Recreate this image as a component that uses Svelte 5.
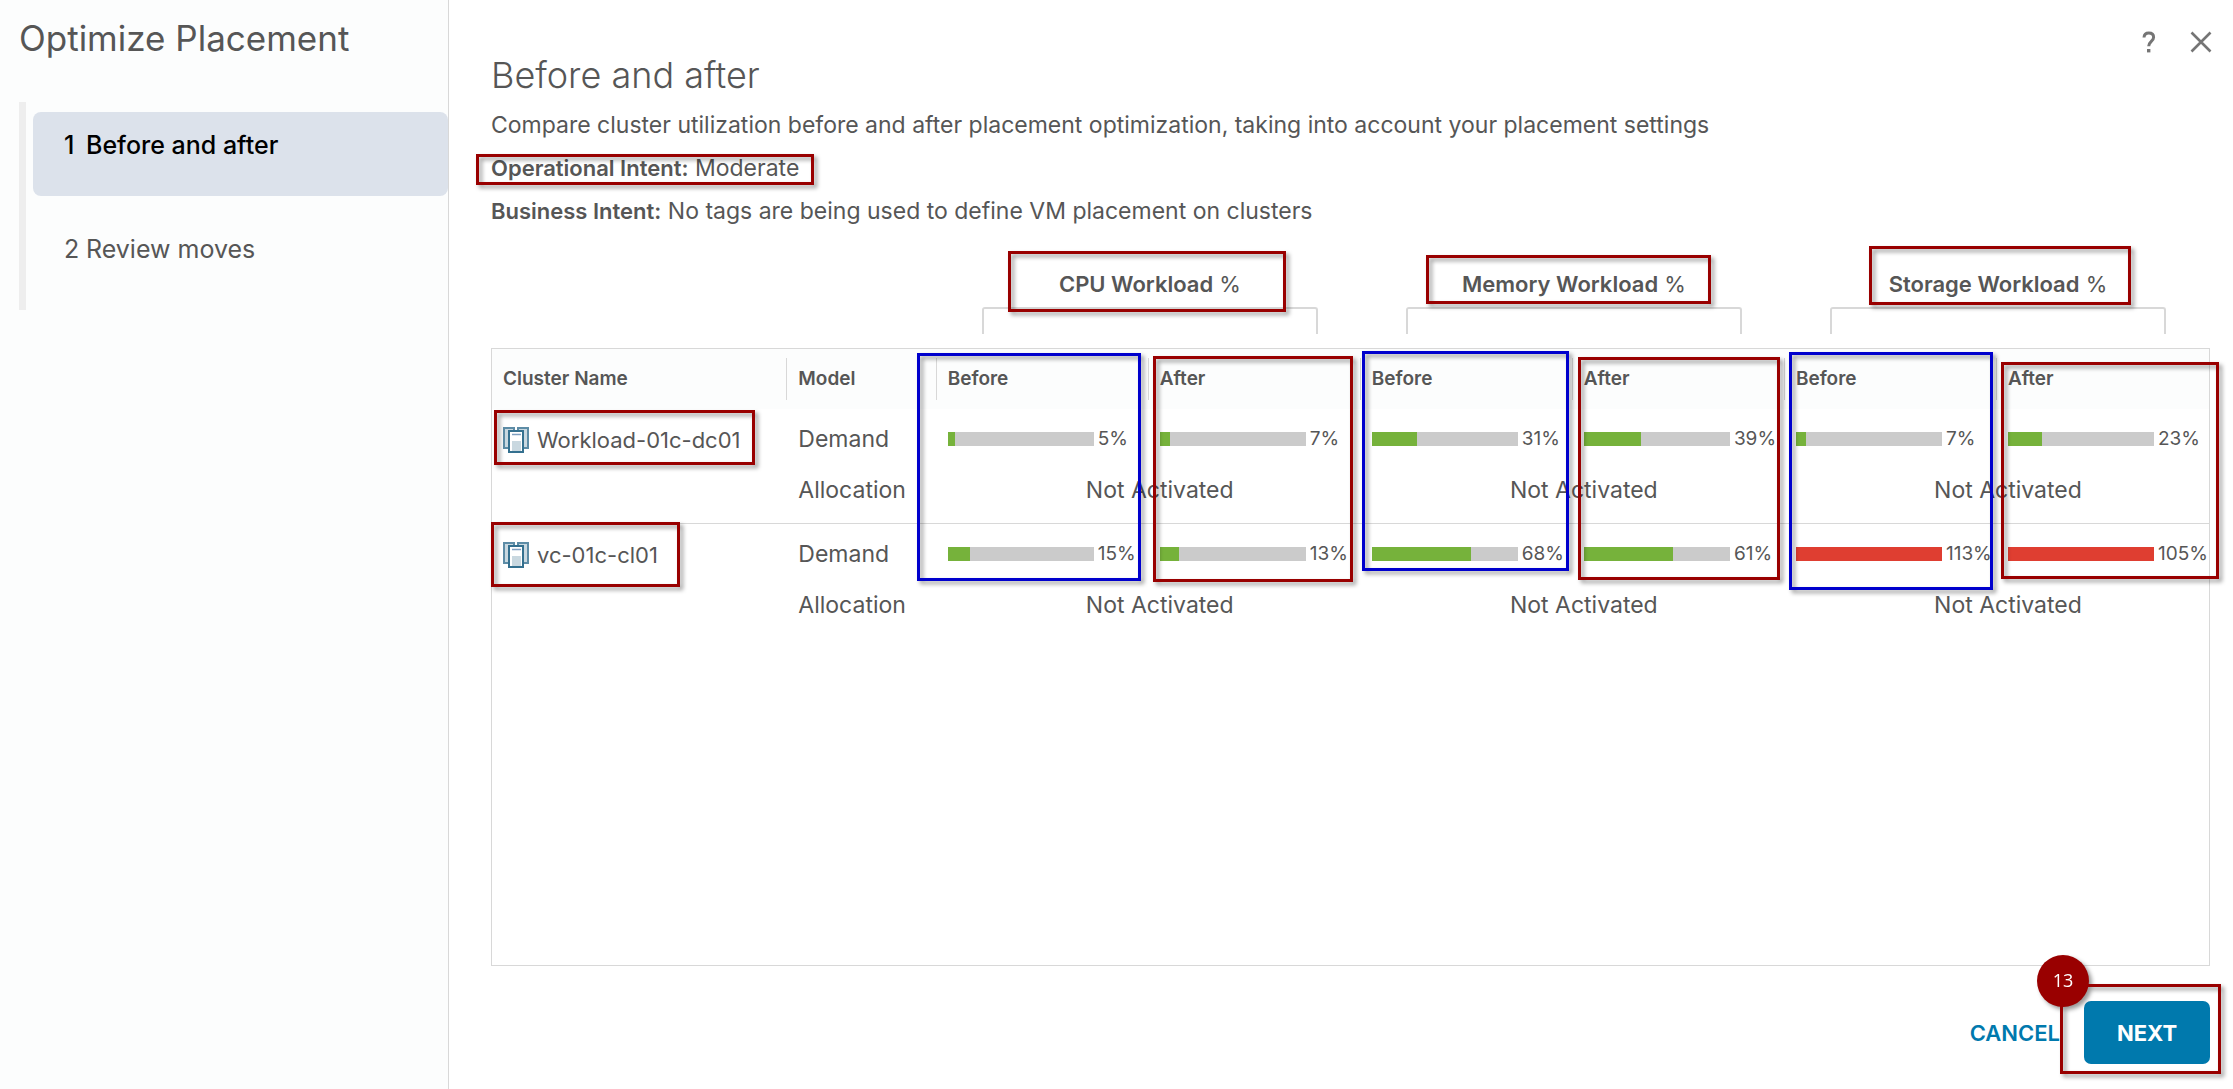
<script>
	const steps = [
		{ label: 'Before and after', active: true },
		{ label: 'Review moves', active: false }
	];

	const groups = ['CPU Workload', 'Memory Workload', 'Storage Workload'];

	// before/after pairs for cpu, memory, storage
	const clusters = [
		{ name: 'Workload-01c-dc01', demand: [5, 7, 31, 39, 7, 23] },
		{ name: 'vc-01c-cl01', demand: [15, 13, 68, 61, 113, 105] }
	];

	// callout frames laid over the dialog
	const marks = [
		{ x: 476, y: 154, w: 338, h: 31 },
		{ x: 1008, y: 251, w: 278, h: 61 },
		{ x: 1426, y: 255, w: 285, h: 49 },
		{ x: 1869, y: 246, w: 262, h: 59 },
		{ x: 494, y: 410, w: 261, h: 55 },
		{ x: 491, y: 522, w: 189, h: 65 },
		{ x: 917, y: 353, w: 224, h: 228, blue: true },
		{ x: 1153, y: 356, w: 200, h: 226 },
		{ x: 1362, y: 351, w: 207, h: 220, blue: true },
		{ x: 1578, y: 357, w: 202, h: 223 },
		{ x: 1789, y: 352, w: 204, h: 238, blue: true },
		{ x: 2001, y: 362, w: 218, h: 217 },
		{ x: 2060, y: 984, w: 161, h: 90, step: 13 }
	];
</script>

<div class="wizard">
	<aside>
		<h1>Optimize Placement</h1>
		<ol>
			{#each steps as step, i}
				<li>
					<button class="step" class:active={step.active} aria-current={step.active ? 'step' : undefined}>
						<span class="num">{i + 1}</span>{step.label}
					</button>
				</li>
			{/each}
		</ol>
	</aside>

	<main>
		<div class="tools">
			<button aria-label="Help">
				<svg width="14" height="22" viewBox="0 0 14 22">
					<path d="M2 6.5C2.2 3.4 4 2 6.8 2c3 0 4.800 1.600 4.800 4.200 0 4.200-4.900 4.200-4.900 9" fill="none" stroke="#757575" stroke-width="3" />
					<rect x="5" y="18" width="3.400" height="3.400" fill="#757575" />
				</svg>
			</button>
			<button aria-label="Close">
				<svg width="22" height="22" viewBox="0 0 22 22">
					<path d="M1.500 1.500l19 19M20.500 1.500l-19 19" fill="none" stroke="#757575" stroke-width="2.600" />
				</svg>
			</button>
		</div>

		<h2>Before and after</h2>
		<p>Compare cluster utilization before and after placement optimization, taking into account your placement settings</p>
		<p><b>Operational Intent:</b> Moderate</p>
		<p><b>Business Intent:</b> No tags are being used to define VM placement on clusters</p>

		<div class="groups">
			{#each groups as group}
				<div class="group">
					<div><b>{group}</b> %</div>
					<div class="bracket"></div>
				</div>
			{/each}
		</div>

		<div class="grid">
			<table>
				<colgroup>
					<col class="col-name" />
					<col class="col-model" />
					<col span="6" />
				</colgroup>
				<thead>
					<tr>
						<th>Cluster Name</th>
						<th>Model</th>
						{#each groups as group}
							<th>Before</th>
							<th>After</th>
						{/each}
					</tr>
				</thead>
				{#each clusters as cluster}
					<tbody>
						<tr class="demand">
							<td rowspan="2">
								<span class="cluster">
									<svg width="26" height="26" viewBox="0 0 26 26">
										<g fill="#c9d8e0" stroke="#5d8ca6" stroke-width="2">
											<rect x="1" y="1" width="10" height="20" />
											<rect x="15" y="1" width="10" height="20" />
										</g>
										<rect x="12" y="0" width="2" height="4" fill="#fff" />
										<rect x="6" y="4" width="14" height="21" fill="#fff" stroke="#34708f" stroke-width="2" />
										<path d="M9 7.500h9" stroke="#7f9fc0" stroke-width="1.500" />
										<rect x="9" y="14" width="9" height="10" fill="#c9d8e0" />
									</svg>
									{cluster.name}
								</span>
							</td>
							<td>Demand</td>
							{#each cluster.demand as value}
								<td>
									<div class="usage">
										<div class="bar">
											<div class="fill" class:over={value > 100} style="width: {Math.min(value, 100)}%"></div>
										</div>
										<span>{value}%</span>
									</div>
								</td>
							{/each}
						</tr>
						<tr class="allocation">
							<td>Allocation</td>
							{#each groups as group}
								<td colspan="2" class="off">Not Activated</td>
							{/each}
						</tr>
					</tbody>
				{/each}
			</table>
		</div>

		<footer>
			<button class="cancel">CANCEL</button>
			<button class="next">NEXT</button>
		</footer>
	</main>

	{#each marks as mark}
		<div
			class="mark"
			class:blue={mark.blue}
			style="left: {mark.x}px; top: {mark.y}px; width: {mark.w}px; height: {mark.h}px"
		>
			{#if mark.step}<span class="badge">{mark.step}</span>{/if}
		</div>
	{/each}
</div>

<style>
	:global(body) {
		margin: 0;
		background: #fff;
	}
	.wizard {
		position: relative;
		display: flex;
		min-height: 100vh;
		color: #565656;
		font-family: Inter, "Open Sans", sans-serif;
		font-size: 23px;
		line-height: 24px;
		overflow: hidden;
	}
	.wizard * {
		box-sizing: border-box;
	}
	button {
		padding: 0;
		border: 0;
		background: none;
		color: inherit;
		font: inherit;
		cursor: pointer;
	}

	aside {
		flex: 0 0 449px;
		background: #fcfdfd;
		border-right: 1px solid #d8d8d8;
	}
	h1 {
		margin: 18px 0 44px 19px;
		font-size: 35px;
		font-weight: 400;
		line-height: 40px;
	}
	ol {
		margin: 0 0 0 19px;
		padding: 0 0 0 7px;
		border-left: 7px solid #eee;
		list-style: none;
	}
	li {
		padding: 10px 0;
		height: 104px;
	}
	.step {
		width: 100%;
		height: 84px;
		padding: 21px 0 39px 31px;
		border-radius: 8px;
		font-size: 25px;
		text-align: left;
	}
	.step.active {
		background: #dce2eb;
		color: #000;
		font-weight: 500;
	}
	.num {
		display: inline-block;
		width: 22px;
	}

	main {
		position: relative;
		flex: 1;
		display: flex;
		flex-direction: column;
		min-width: 0;
		padding: 55px 23px 25px 42px;
	}
	.tools {
		position: absolute;
		top: 31px;
		right: 21px;
		display: flex;
		gap: 34px;
	}
	.tools svg {
		display: block;
	}
	h2 {
		margin: 0 0 9px;
		font-size: 36px;
		font-weight: 300;
		line-height: 40px;
	}
	p {
		margin: 0;
		line-height: 43px;
	}
	b {
		font-weight: 600;
	}
	p b {
		font-size: 22px;
	}

	.groups {
		display: grid;
		grid-template-columns: repeat(3, 1fr);
		margin-top: 39px;
		padding-left: 26%;
		font-size: 22px;
	}
	.group {
		padding: 0 44px;
		text-align: center;
	}
	.bracket {
		height: 27px;
		margin: 11px 0 14px;
		border: 2px solid #d8d8d8;
		border-bottom: 0;
		border-radius: 3px 3px 0 0;
	}

	.grid {
		flex: 1;
		border: 1px solid #d8d8d8;
	}
	table {
		width: 100%;
		table-layout: fixed;
		border-collapse: separate;
		border-spacing: 0;
	}
	.col-name {
		width: 17.2%;
	}
	.col-model {
		width: 8.7%;
	}
	th {
		position: relative;
		height: 60px;
		padding: 0 0 0 11px;
		background: #fcfdfd;
		font-size: 19px;
		font-weight: 600;
		text-align: left;
	}
	th + th::before {
		content: "";
		position: absolute;
		top: 9px;
		bottom: 9px;
		left: -1px;
		border-left: 1px solid #d8d8d8;
	}
	td {
		padding: 18px 0 9px 11px;
		vertical-align: top;
		white-space: nowrap;
	}
	.allocation td {
		padding-bottom: 21px;
	}
	tbody:not(:last-child) .allocation td,
	tbody:not(:last-child) td[rowspan] {
		border-bottom: 1px solid #d8d8d8;
	}
	.allocation .off {
		padding-left: 22px;
		text-align: center;
	}
	.cluster {
		display: flex;
		align-items: center;
		gap: 8px;
		font-size: 22px;
	}
	.usage {
		display: flex;
		align-items: center;
		gap: 4px;
		font-size: 19px;
	}
	.usage span {
		flex: 0 0 51px;
	}
	.bar {
		flex: 1;
		height: 14px;
		background: #cbcbcb;
	}
	.fill {
		height: 100%;
		background: #76b23b;
	}
	.fill.over {
		background: #df3e31;
	}

	footer {
		display: flex;
		justify-content: flex-end;
		align-items: center;
		gap: 24px;
		margin-top: 35px;
		font-size: 22px;
		font-weight: 600;
		letter-spacing: 2px;
	}
	.cancel {
		color: #0079ad;
	}
	.next {
		width: 126px;
		height: 63px;
		border-radius: 7px;
		background: #0079ad;
		color: #fff;
		font-weight: 700;
	}

	.mark {
		position: absolute;
		border: 3px solid #990000;
		filter: drop-shadow(3px 3px 2px rgba(0, 0, 0, 0.4));
		pointer-events: none;
	}
	.mark.blue {
		border-color: #0000cd;
	}
	.badge {
		position: absolute;
		top: -32px;
		left: -26px;
		width: 52px;
		height: 52px;
		border-radius: 50%;
		background: #990000;
		color: #fff;
		font: 18px/50px "Open Sans", sans-serif;
		text-align: center;
	}
</style>
